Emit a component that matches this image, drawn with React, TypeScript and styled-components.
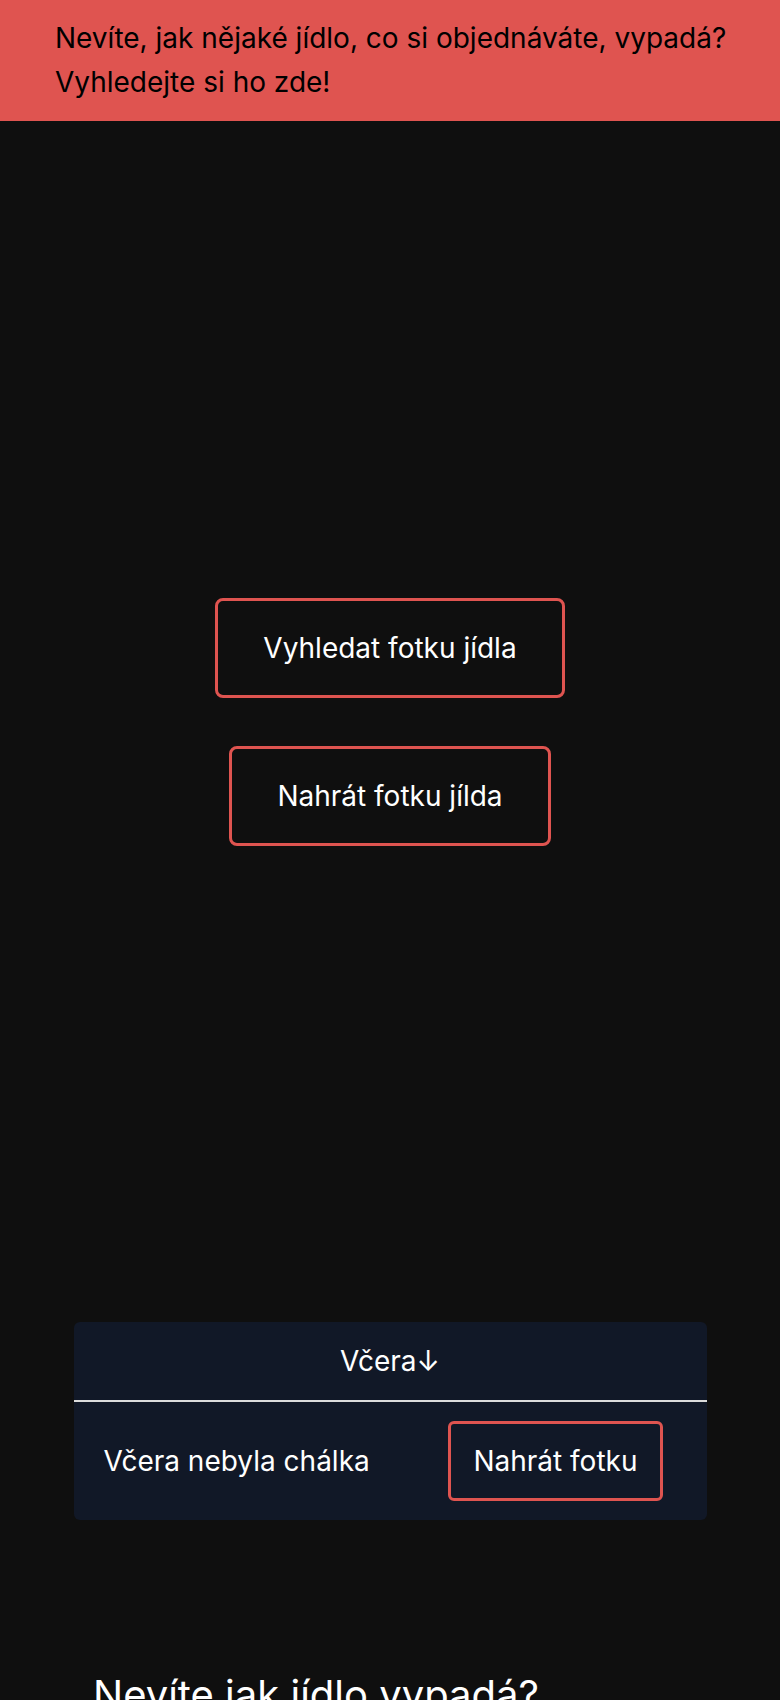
import React from "react";
import styled, { createGlobalStyle } from "styled-components";

const GlobalStyle = createGlobalStyle`
  html, body {
    margin: 0;
    padding: 0;
    background: #0f0f0f;
  }
  body {
    font-family: Inter, "Noto Sans", "Liberation Sans", sans-serif;
    color: #ffffff;
  }
  * { box-sizing: border-box; }
`;

const Page = styled.div`
  min-height: 1700px;
  background: #0f0f0f;
  display: flex;
  flex-direction: column;
`;

const Banner = styled.div`
  background: #df5450;
  color: #000000;
  padding: 16px 30px 17px 55px;
  font-size: 28px;
  line-height: 44px;
`;

const Hero = styled.section`
  height: 1201px;
  display: flex;
  flex-direction: column;
  align-items: center;
  justify-content: center;
  gap: 48px;
`;

const OutlineButton = styled.button<{ $small?: boolean }>`
  font-family: inherit;
  background: transparent;
  color: #ffffff;
  border: 3px solid #df5450;
  border-radius: ${(p) => (p.$small ? "6px" : "8px")};
  font-size: 28px;
  line-height: 30px;
  padding: ${(p) => (p.$small ? "22px 22px" : "32px 45px")};
  cursor: pointer;
`;

const Card = styled.div`
  width: 633px;
  margin: 0 auto;
  background: #111827;
  border-radius: 6px;
  display: flex;
  flex-direction: column;
`;

const CardHeader = styled.div`
  height: 80px;
  display: flex;
  align-items: center;
  justify-content: center;
  font-size: 28px;
  border-bottom: 2px solid #dcdcdc;
`;

const CardRow = styled.div`
  height: 118px;
  display: flex;
  align-items: center;
  justify-content: space-between;
  padding: 0 44px 0 30px;
  border-radius: 6px;
  font-size: 28px;
`;

const Heading = styled.h2`
  margin: 151px 0 0 93px;
  font-size: 40px;
  font-weight: 400;
  line-height: 48px;
`;

export default function App() {
  return (
    <>
      <GlobalStyle />
      <Page>
        <Banner>
          Nevíte, jak nějaké jídlo, co si objednáváte, vypadá? Vyhledejte si ho zde!
        </Banner>
        <Hero>
          <OutlineButton>Vyhledat fotku jídla</OutlineButton>
          <OutlineButton>Nahrát fotku jílda</OutlineButton>
        </Hero>
        <Card>
          <CardHeader>Včera↓</CardHeader>
          <CardRow>
            <span>Včera nebyla chálka</span>
            <OutlineButton $small>Nahrát fotku</OutlineButton>
          </CardRow>
        </Card>
        <Heading>Nevíte jak jídlo vypadá?</Heading>
      </Page>
    </>
  );
}
